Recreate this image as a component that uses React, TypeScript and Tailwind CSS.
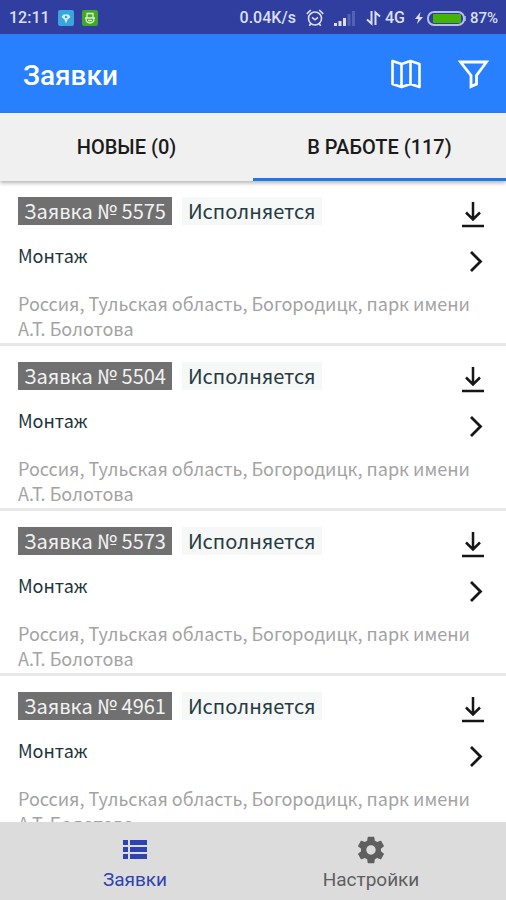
import clsx from "clsx";
import { useState } from "react";

const REQUESTS = [
  { id: "5575", status: "Исполняется", kind: "Монтаж" },
  { id: "5504", status: "Исполняется", kind: "Монтаж" },
  { id: "5573", status: "Исполняется", kind: "Монтаж" },
  { id: "4961", status: "Исполняется", kind: "Монтаж" },
];

const ADDRESS = "Россия, Тульская область, Богородицк, парк имени А.Т. Болотова";

const TABS = ["НОВЫЕ (0)", "В РАБОТЕ (117)"];

function StatusBar() {
  return (
    <div className="flex h-[34px] shrink-0 items-center justify-between bg-[#303f9f] pl-[9px] pr-2 pt-0.5 text-base font-medium text-[#dcdff2]">
      <div className="flex items-center gap-2">
        <span>12:11</span>
        <svg width="16" height="16" viewBox="0 0 16 16" aria-hidden>
          <rect width="16" height="16" rx="2" fill="#39a5dc" />
          <path d="M5.500 4.500h5L12.500 7 9.500 9.500 8 13.500 6.500 9.500 3.500 7Z" fill="#d8f1fc" />
          <circle cx="8" cy="7" r="1.3" fill="#39a5dc" />
        </svg>
        <svg width="16" height="16" viewBox="0 0 16 16" fill="none" stroke="#d9f5cd" strokeWidth="1.3" aria-hidden>
          <rect width="16" height="16" rx="2" fill="#43a828" stroke="none" />
          <path d="M5 7.500V3.500h6v4M3 8h10M4 8.500c0 6 8 6 8 0M6 10.500h4" />
        </svg>
      </div>
      <div className="flex items-center gap-2.5">
        <span>0.04K/s</span>
        <svg width="18" height="18" viewBox="0 0 18 18" fill="none" stroke="currentColor" strokeWidth="1.6" aria-hidden>
          <circle cx="9" cy="9.500" r="6.500" />
          <path d="M.8 4.800 4.800 1M17.200 4.800 13.200 1M6 8.300l3 2.500 3-2.500M4.800 14.800l-1.500 2M13.200 14.800l1.500 2" />
        </svg>
        <svg width="22" height="15" viewBox="0 0 22 15" fill="currentColor" aria-hidden>
          <path d="M0 12h3v3H0zM4.500 10h3v5h-3zM9 7h3v8H9z" />
          <path d="M13.500 3h3v12h-3zM18 0h3v15h-3z" opacity=".22" />
        </svg>
        <div className="flex items-center gap-1">
          <svg width="15" height="16" viewBox="0 0 15 16" fill="none" stroke="currentColor" strokeWidth="2" aria-hidden>
            <path d="M5.500 1v12.500L1 9.500M9.500 15V2.500L14 6.500" />
          </svg>
          <span>4G</span>
        </div>
        <div className="flex items-center gap-1">
          <svg width="8" height="12" viewBox="0 0 8 12" fill="currentColor" aria-hidden>
            <path d="M5.500 0 0 7h3.300L2 12 8 5H4.500z" />
          </svg>
          <svg width="39" height="15" viewBox="0 0 39 15" aria-hidden>
            <rect x="1" y="1" width="36" height="13" rx="6" fill="none" stroke="#b9bfe4" strokeWidth="2" />
            <rect x="6" y="3" width="28" height="9" rx="1" fill="#41b500" />
            <path d="M38 5v5" stroke="#b9bfe4" strokeWidth="1.500" />
          </svg>
          <span className="text-[15px]">87%</span>
        </div>
      </div>
    </div>
  );
}

function Header() {
  return (
    <header className="flex h-[79px] shrink-0 items-center justify-between bg-[#2880ff] pl-[23px] pr-4 text-white">
      <h1 className="pt-1 text-[28px] font-medium">Заявки</h1>
      <div className="flex items-center gap-9">
        <button type="button" aria-label="Карта">
          <svg width="32" height="32" viewBox="0 0 32 32" fill="none" stroke="currentColor" strokeWidth="2.600" strokeLinejoin="round" aria-hidden>
            <path d="M2.500 3 11.500 6 20.500 3 29.500 6V29L20.500 26 11.500 29 2.500 26ZM11.500 6V29M20.500 3V26" />
          </svg>
        </button>
        <button type="button" aria-label="Фильтр">
          <svg width="32" height="32" viewBox="0 0 32 32" fill="none" stroke="currentColor" strokeWidth="2.800" aria-hidden>
            <path d="M2.500 4H28.500L18.500 17.500V26L13 28.500V17.500Z" />
          </svg>
        </button>
      </div>
    </header>
  );
}

function Tabs() {
  const [active, setActive] = useState(1);

  return (
    <div
      role="tablist"
      className="relative z-10 grid h-[68px] shrink-0 grid-cols-2 bg-[#f0f0f0] shadow-[0_2px_4px_rgba(0,0,0,0.3)]"
    >
      {TABS.map((tab, i) => (
        <button
          key={tab}
          type="button"
          role="tab"
          aria-selected={active === i}
          onClick={() => setActive(i)}
          className={clsx(
            "border-b-[3px] pt-0.5 text-xl font-medium text-[#1b1b1b]",
            active === i ? "border-[#2176e8]" : "border-transparent"
          )}
        >
          {tab}
        </button>
      ))}
    </div>
  );
}

function RequestRow({ id, status, kind }: { id: string; status: string; kind: string }) {
  return (
    <li className="border-b-[3px] border-[#e8e8e8] pb-0.5 pl-[18px] pr-5 pt-4">
      <div className="flex h-[72px] justify-between">
        <div>
          <div className="flex gap-2.5 text-xl leading-7">
            <span className="bg-[#707070] px-1.5 text-[#f2f2f2]">Заявка № {id}</span>
            <span className="bg-[#f6f7f7] px-1.5 text-[#263b42]">{status}</span>
          </div>
          <p className="pt-4 text-lg leading-7 text-[#20343b]">{kind}</p>
        </div>
        <div className="flex flex-col items-center gap-5 pt-1">
          <button type="button" aria-label={`Скачать заявку № ${id}`}>
            <svg width="26" height="28" viewBox="0 0 26 28" fill="none" stroke="#161616" strokeWidth="2.500" aria-hidden>
              <path d="M13 1V18M6 11.500l7 7 7-7M2 25H24" />
            </svg>
          </button>
          <button type="button" aria-label={`Открыть заявку № ${id}`}>
            <svg width="26" height="26" viewBox="0 0 26 26" fill="none" stroke="#161616" strokeWidth="2.800" aria-hidden>
              <path d="M11 3l9.500 9.500L11 22" />
            </svg>
          </button>
        </div>
      </div>
      <p className="pt-[22px] text-lg leading-[25px] text-[#a3a3a3]">{ADDRESS}</p>
    </li>
  );
}

function BottomNav() {
  return (
    <nav className="flex h-[78px] shrink-0 bg-[#dcdcdc] px-[17px] pt-3 text-[19px] leading-6 text-[#5f5f5f]">
      <a href="#requests" className="flex flex-1 flex-col items-center gap-0.5 text-[#2f43b0]">
        <svg width="32" height="32" viewBox="0 0 32 32" fill="currentColor" aria-hidden>
          <path d="M4 6h5v5H4zM11 6h17v5H11zM4 13h5v5H4zM11 13h17v5H11zM4 20h5v5H4zM11 20h17v5H11z" />
        </svg>
        Заявки
      </a>
      <a href="#settings" className="flex flex-1 flex-col items-center gap-0.5">
        <svg width="32" height="32" viewBox="0 0 24 24" fill="currentColor" aria-hidden>
          <path d="M19.430 12.980c.04-.32.07-.64.07-.98s-.03-.66-.07-.98l2.110-1.650c.19-.15.24-.42.12-.64l-2-3.460c-.12-.22-.39-.3-.61-.22l-2.490 1c-.52-.4-1.080-.73-1.690-.98l-.38-2.650C14.460 2.180 14.250 2 14 2h-4c-.25 0-.46.18-.49.42l-.38 2.650c-.61.25-1.170.59-1.690.98l-2.490-1c-.23-.09-.49 0-.61.22l-2 3.460c-.13.22-.07.49.12.64l2.110 1.650c-.04.32-.07.65-.07.98s.03.66.07.98l-2.110 1.650c-.19.15-.24.42-.12.64l2 3.460c.12.22.39.3.61.22l2.490-1c.52.4 1.080.73 1.690.98l.38 2.650c.03.24.24.42.49.42h4c.25 0 .46-.18.49-.42l.38-2.650c.61-.25 1.170-.59 1.690-.98l2.490 1c.23.09.49 0 .61-.22l2-3.460c.12-.22.07-.49-.12-.64l-2.110-1.650zM12 15.500c-1.930 0-3.500-1.570-3.500-3.500s1.570-3.500 3.500-3.500 3.500 1.570 3.500 3.500-1.570 3.500-3.500 3.500z" />
        </svg>
        Настройки
      </a>
    </nav>
  );
}

export default function App() {
  return (
    <div className="flex h-screen flex-col overflow-hidden bg-white font-[Roboto,sans-serif]">
      <StatusBar />
      <Header />
      <Tabs />
      <main className="min-h-0 flex-1 overflow-hidden font-['Noto_Sans_CJK_SC','Noto_Sans',sans-serif]">
        <ul>
          {REQUESTS.map((request) => (
            <RequestRow key={request.id} {...request} />
          ))}
        </ul>
      </main>
      <BottomNav />
    </div>
  );
}
